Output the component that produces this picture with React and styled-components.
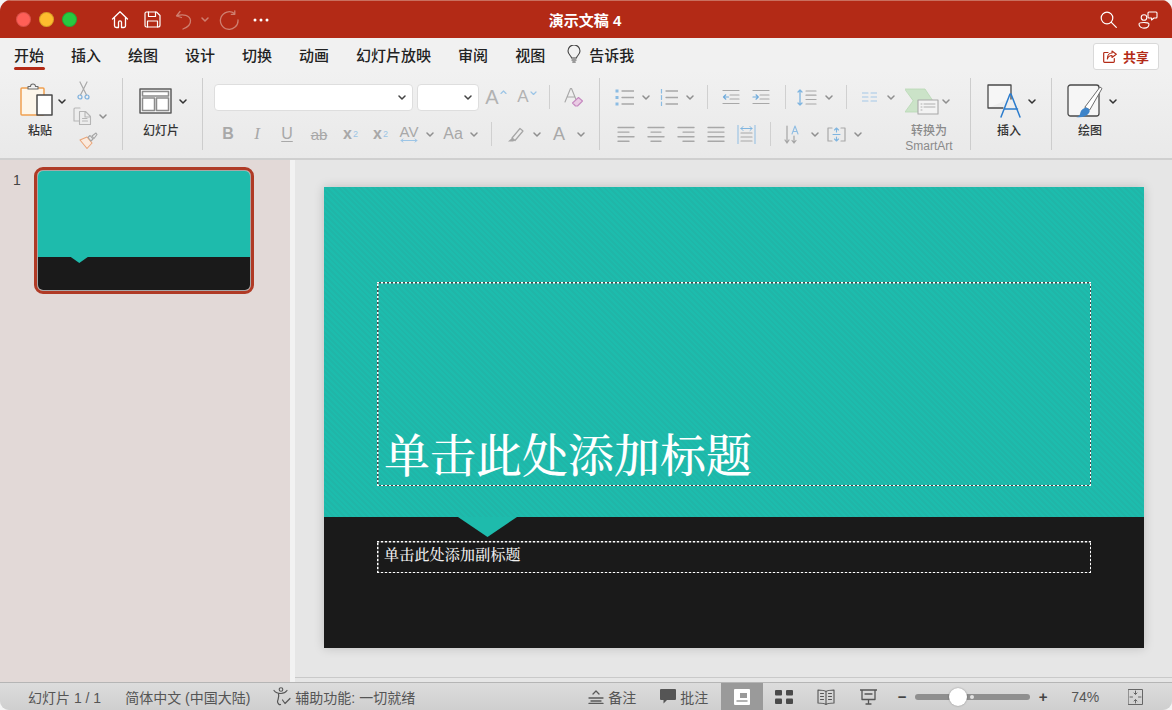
import styled, { createGlobalStyle, css } from 'styled-components';

const RED = '#b32a16';
const GREY = '#a8a8a8';
const BLUE = '#9cc5e6';

const GlobalStyle = createGlobalStyle`
  html, body { margin: 0; padding: 0; background: #f4f4f4; }
  body { font-family: "Liberation Sans", "Noto Sans CJK SC", sans-serif; }
`;

// --- WINDOW ---
const Window = styled.div`
  width: 1172px;
  height: 710px;
  display: flex;
  flex-direction: column;
  overflow: hidden;
  border-radius: 11px 11px 9px 9px;
  background: #e6e6e6;
`;

const TitleBar = styled.header`
  height: 38px;
  flex: none;
  position: relative;
  display: flex;
  align-items: center;
  padding: 0 14px 0 16px;
  background: ${RED};
  box-sizing: border-box;
  border-top: 1px solid #c9705f;
`;

const Light = styled.span`
  width: 15px;
  height: 15px;
  border-radius: 50%;
  margin-right: 8px;
  background: ${p => p.$color};
  box-shadow: inset 0 0 0 1px rgba(0, 0, 0, 0.15);
`;

const QuickTool = styled.span`
  width: ${p => p.$w}px;
  display: inline-flex;
  justify-content: center;
  align-items: center;
  margin-left: ${p => p.$ml || 0}px;
`;

const DocTitle = styled.div`
  position: absolute;
  left: 0;
  right: 0;
  text-align: center;
  padding-right: 2px;
  color: #fff;
  font-size: 15px;
  font-weight: 700;
  pointer-events: none;
`;

const Spacer = styled.div`
  flex: 1;
`;

const TabBar = styled.nav`
  height: 32px;
  flex: none;
  display: flex;
  align-items: center;
  padding: 0 13px 0 14px;
  background: #f1f1f1;
  box-sizing: border-box;
`;

const Tab = styled.span`
  position: relative;
  font-size: 15px;
  font-weight: 500;
  color: #222;
  margin-right: 27px;
  white-space: nowrap;
  ${p => p.$active && `
    &::after {
      content: '';
      position: absolute;
      left: 0;
      right: -1px;
      bottom: -5px;
      height: 3px;
      border-radius: 2px;
      background: ${RED};
    }
  `}
`;

const TellMe = styled.span`
  display: inline-flex;
  align-items: center;
  gap: 8px;
  margin-left: -5px;
  font-size: 15px;
  font-weight: 500;
  color: #222;
`;

const ShareButton = styled.button`
  width: 66px;
  height: 27px;
  margin-top: 5px;
  display: flex;
  align-items: center;
  justify-content: center;
  gap: 6px;
  padding: 0;
  background: #fff;
  border: 1px solid #d9d9d9;
  border-radius: 3px;
  color: ${RED};
  font: 700 13px "Liberation Sans", "Noto Sans CJK SC", sans-serif;
`;

// --- RIBBON ---
const Ribbon = styled.section`
  height: 90px;
  flex: none;
  display: flex;
  align-items: flex-start;
  box-sizing: border-box;
  background: linear-gradient(#f1f1f1, #e9e9e9);
  border-bottom: 2px solid #cfcfcf;
`;

const Group = styled.div`
  width: ${p => p.$w}px;
  height: 88px;
  flex: none;
  display: flex;
  box-sizing: border-box;
  padding-left: ${p => p.$pl || 0}px;
`;

const GroupSep = styled.div`
  width: 1px;
  height: 72px;
  margin-top: 8px;
  flex: none;
  background: #cdcdcd;
`;

const Big = styled.div`
  width: ${p => p.$w}px;
  flex: none;
  display: flex;
  flex-direction: column;
  padding-top: 13px;
`;

const BigIcon = styled.div`
  height: 36px;
  display: flex;
  align-items: center;
  padding-left: ${p => p.$pl || 0}px;
`;

const BigLabel = styled.div`
  font-size: 12px;
  line-height: 15px;
  margin-top: 5px;
  width: ${p => p.$w}px;
  text-align: center;
  font-weight: 500;
  color: ${p => (p.$muted ? '#8a8a8a' : '#333')};
`;

const Stack = styled.div`
  display: flex;
  flex-direction: column;
  align-items: flex-start;
  width: ${p => p.$w}px;
  padding-top: ${p => p.$pt ?? 13}px;
  gap: ${p => p.$gap ?? 9}px;
  flex: none;
`;

const ToolRow = styled.div`
  height: ${p => p.$h || 28}px;
  display: flex;
  align-items: center;
`;

const Tool = styled.span`
  width: ${p => p.$w}px;
  margin-left: ${p => p.$ml || 0}px;
  flex: none;
  display: inline-flex;
  justify-content: center;
  align-items: center;
  color: ${p => p.$color || GREY};
  font-size: ${p => p.$size || 15}px;
  font-weight: ${p => p.$weight || 400};
  font-family: ${p => (p.$serif ? '"Liberation Serif", serif' : 'inherit')};
`;

const RowSep = styled.span`
  width: 1px;
  height: 24px;
  flex: none;
  margin-left: ${p => p.$ml || 0}px;
  background: #d0d0d0;
`;

const FontBox = styled.div`
  width: ${p => p.$w}px;
  height: 27px;
  flex: none;
  margin-right: ${p => p.$mr || 0}px;
  display: flex;
  align-items: center;
  justify-content: flex-end;
  padding-right: 6px;
  box-sizing: border-box;
  background: #fff;
  border: 1px solid #dedede;
  border-radius: 4px;
`;

const Caret = styled.span`
  display: inline-flex;
  align-self: flex-start;
  margin: 4px 0 0 1px;
`;

const Sup = styled.sup`
  font-size: 9px;
  font-weight: 400;
  color: ${BLUE};
  margin-left: 1px;
`;

const Sub = styled.sub`
  font-size: 9px;
  font-weight: 400;
  color: ${BLUE};
  margin-left: 1px;
`;

const Strike = styled.span`
  text-decoration: line-through;
`;

const Under = styled.span`
  text-decoration: underline;
  text-underline-offset: 2px;
`;

const AV = styled.span`
  display: inline-flex;
  flex-direction: column;
  align-items: center;
  font-size: 15px;
  line-height: 13px;
`;

// --- MAIN AREA ---
const Main = styled.main`
  flex: 1;
  min-height: 0;
  display: flex;
`;

const SlidePanel = styled.aside`
  width: 272px;
  flex: none;
  display: flex;
  gap: 16px;
  padding: 7px 5px 0 13px;
  background: #e2d9d7;
  border-right: 5px solid #f2f2f2;
`;

const SlideNumber = styled.span`
  font-size: 14px;
  color: #444;
  margin-top: 5px;
`;

const Thumb = styled.div`
  width: 214px;
  height: 121px;
  flex: none;
  position: relative;
  display: flex;
  flex-direction: column;
  border: 1px solid #a7a7a7;
  outline: 3px solid #b03a25;
  border-radius: 6px;
  margin-top: 3px;
  box-sizing: border-box;
`;

const ThumbTop = styled.div`
  height: 86px;
  position: relative;
  background: #1ebbac;
  border-radius: 5px 5px 0 0;
`;

const ThumbBottom = styled.div`
  flex: 1;
  background: #1a1a1a;
  border-radius: 0 0 5px 5px;
`;

const Notch = styled.div`
  position: absolute;
  top: 100%;
  left: ${p => p.$left}px;
  width: ${p => p.$w}px;
  height: ${p => p.$h}px;
  background: #1ebbac;
  clip-path: polygon(0 0, 100% 0, 50% 100%);
`;

const Stage = styled.div`
  flex: 1;
  min-width: 0;
  display: flex;
  flex-direction: column;
  background: #e6e6e6;
`;

const StageInner = styled.div`
  flex: 1;
  padding: 27px 0 0 29px;
  border-bottom: 1px solid #c9c9c9;
  margin-bottom: 4px;
`;

const Slide = styled.article`
  width: 820px;
  height: 461px;
  display: flex;
  flex-direction: column;
  box-shadow: 0 0 10px rgba(0, 0, 0, 0.18);
  font-family: "Noto Serif CJK SC", "Liberation Serif", "Noto Sans CJK SC", serif;
`;

const SlideTop = styled.div`
  height: 330px;
  flex: none;
  position: relative;
  box-sizing: border-box;
  padding: 95px 53px 31px 53px;
  background: repeating-linear-gradient(45deg, #1dbcad 0 2px, #20b6a8 2px 4px);
`;

const SlideBottom = styled.div`
  flex: 1;
  padding: 24px 53px 0;
  background: #1a1a1a;
`;

// dashed selection frame, white with dark gaps
const selectionFrame = css`
  background:
    repeating-linear-gradient(90deg, #fff 0 2px, #4a4a4a 2px 4px) left top / 100% 1.5px no-repeat,
    repeating-linear-gradient(90deg, #fff 0 2px, #4a4a4a 2px 4px) left bottom / 100% 1.5px no-repeat,
    repeating-linear-gradient(0deg, #fff 0 2px, #4a4a4a 2px 4px) left top / 1.5px 100% no-repeat,
    repeating-linear-gradient(0deg, #fff 0 2px, #4a4a4a 2px 4px) right top / 1.5px 100% no-repeat;
`;

const TitleHolder = styled.div`
  height: 100%;
  box-sizing: border-box;
  display: flex;
  align-items: flex-end;
  padding: 0 7px 4px;
  ${selectionFrame}
`;

const TitleText = styled.h1`
  margin: 0;
  color: #fff;
  font-size: 46px;
  line-height: 60px;
  font-weight: 500;
`;

const SubtitleHolder = styled.div`
  height: 32px;
  box-sizing: border-box;
  padding: 0 7px;
  color: #efefef;
  font-size: 15px;
  font-weight: 500;
  letter-spacing: 0.2px;
  line-height: 25px;
  ${selectionFrame}
`;

// --- STATUS BAR ---
const StatusBar = styled.footer`
  height: 28px;
  flex: none;
  display: flex;
  align-items: center;
  box-sizing: border-box;
  padding-left: 28px;
  background: linear-gradient(#dcdcdc, #cfcfcf);
  border-top: 1px solid #b5b5b5;
  color: #555;
  font-size: 14px;
`;

const StatusText = styled.span`
  margin-left: ${p => p.$ml || 0}px;
  white-space: nowrap;
  display: inline-flex;
  align-items: center;
  gap: ${p => p.$gap || 0}px;
`;

const ViewButton = styled.span`
  width: ${p => p.$w || 42}px;
  height: 27px;
  margin-left: ${p => p.$ml || 0}px;
  flex: none;
  display: inline-flex;
  align-items: center;
  justify-content: center;
  background: ${p => (p.$active ? '#9a9a9a' : 'transparent')};
`;

const ZoomTrack = styled.div`
  width: 115px;
  height: 6px;
  margin: 0 8px 0 8px;
  position: relative;
  border-radius: 3px;
  background: #8f8f8f;

  &::after {
    content: '';
    position: absolute;
    left: 55px;
    top: 1px;
    width: 4px;
    height: 4px;
    border-radius: 50%;
    background: #e2e2e2;
  }
`;

const ZoomThumb = styled.span`
  position: absolute;
  left: 34px;
  top: -6px;
  width: 18px;
  height: 18px;
  border-radius: 50%;
  background: #fff;
  box-shadow: 0 0 2px rgba(0, 0, 0, 0.35);
`;

// --- ICONS ---
const Svg = ({ w, h = w, children, vb }) => (
  <svg width={w} height={h} viewBox={vb || `0 0 ${w} ${h}`} fill="none" strokeLinecap="round" strokeLinejoin="round">{children}</svg>
);

const Chev = ({ color = '#8f8f8f', w = 8 }) => (
  <Svg w={w} h={5} vb="0 0 8 5"><path d="M1 1l3 3 3-3" stroke={color} strokeWidth="1.500" /></Svg>
);

const Lines = ({ rows, color = GREY }) => (
  <Svg w={18} h={17}>
    {rows.map(([x1, x2], i) => <path key={i} d={`M${x1} ${1.5 + i * 4.6}H${x2}`} stroke={color} strokeWidth="1.400" />)}
  </Svg>
);

const Home = () => (
  <Svg w={18} h={19}><path d="M1.500 9L9 1.800 16.500 9M3.500 7.500v8.200a1.800 1.800 0 0 0 1.800 1.800h2.200v-5.200a1.500 1.500 0 0 1 3 0v5.200h2.200a1.800 1.800 0 0 0 1.800-1.800V7.500" stroke="#fff" strokeWidth="1.300" /></Svg>
);

const Save = () => (
  <Svg w={17} h={17}>
    <path d="M2.500 1h10l3.500 3.500v9.500a2 2 0 0 1-2 2h-11.500a1.500 1.500 0 0 1-1.500-1.500v-12a1.500 1.500 0 0 1 1.500-1.500z" stroke="#fff" strokeWidth="1.200" />
    <path d="M4.500 1v4.500h7v-4.500M3.500 16v-6h10v6" stroke="#fff" strokeWidth="1.200" />
  </Svg>
);

const Undo = () => (
  <Svg w={18} h={20}><path d="M5 1.500L1.500 6 6.500 7.500M2 6c6-2.500 13-.5 13.500 4.500.3 4-3.500 7-7.500 8.500" stroke="#cf7f70" strokeWidth="1.300" /></Svg>
);

const Redo = () => (
  <Svg w={20} h={20}><path d="M15.500 3.500A8.800 8.800 0 1 0 19 10M15.800.8v3.500h-3.500" stroke="#cf7f70" strokeWidth="1.300" /></Svg>
);

const Search = () => (
  <Svg w={17} h={17}><circle cx="7" cy="7" r="5.800" stroke="#fff" strokeWidth="1.200" /><path d="M11.300 11.300l5 5" stroke="#fff" strokeWidth="1.200" /></Svg>
);

const People = () => (
  <Svg w={20} h={18}>
    <circle cx="6" cy="6.500" r="2.800" stroke="#fff" strokeWidth="1.100" />
    <path d="M1 13c0-2 10-2 10 0 0 5.500-10 5.500-10 0z" stroke="#fff" strokeWidth="1.100" />
    <path d="M11 1h7a1 1 0 0 1 1 1v4a1 1 0 0 1-1 1h-2l-2.500 2v-2h-2.500a1 1 0 0 1-1-1v-4a1 1 0 0 1 1-1z" stroke="#fff" strokeWidth="1.100" />
  </Svg>
);

const Bulb = () => (
  <Svg w={14} h={19}>
    <path d="M4.500 13c0-2-3.500-3.500-3.500-7a6 6 0 0 1 12 0c0 3.500-3.500 5-3.500 7z" stroke="#444" strokeWidth="1.100" />
    <path d="M5 15h4M5.800 17h2.400" stroke="#444" strokeWidth="1.200" />
  </Svg>
);

const ShareIcon = () => (
  <Svg w={14} h={13}>
    <path d="M5 2.500h-3.500a.8.8 0 0 0-.8.8v8.200a.8.8 0 0 0 .8.8h9a.8.8 0 0 0 .8-.8v-3" stroke={RED} strokeWidth="1.200" />
    <path d="M9 1l4.300 3.300L9 7.500V5.500C6.500 5.500 5 7 4.300 9c0-3.500 1.800-6 4.700-6z" stroke={RED} strokeWidth="1.100" />
  </Svg>
);

const PasteIcon = () => (
  <Svg w={35} h={36}>
    <rect x="1" y="5" width="23" height="27" rx="1" fill="#fdf6ea" stroke="#f0a050" strokeWidth="1.500" />
    <path d="M8 6V3.500h2.500a2.500 2.500 0 0 1 5 0H18V6z" fill="#f2f2f2" stroke="#6b6b6b" strokeWidth="1.100" />
    <rect x="17" y="12" width="15" height="20" fill="#fff" stroke="#4a4a4a" strokeWidth="1.500" />
  </Svg>
);

const Scissors = () => (
  <Svg w={13} h={19}>
    <path d="M3 1l6.500 13M10 1L3.500 14" stroke="#a9a9a9" strokeWidth="1.200" />
    <circle cx="3" cy="16" r="2" stroke="#7cb0dd" strokeWidth="1.200" />
    <circle cx="10" cy="16" r="2" stroke="#7cb0dd" strokeWidth="1.200" />
  </Svg>
);

const CopyIcon = () => (
  <Svg w={20} h={18}>
    <path d="M7 1H2a1 1 0 0 0-1 1v12h5" stroke="#b5b5b5" strokeWidth="1.100" />
    <path d="M6.500 4.500h6l5 5v8h-11zM12 5v5h5.500M9.500 11.500h4.500M9.500 14h5" stroke="#b5b5b5" strokeWidth="1.100" />
  </Svg>
);

const BrushIcon = () => (
  <Svg w={19} h={17}>
    <path d="M1 8l7-3 5 6-5 5.500z" fill="#fbeadd" stroke="#eaa578" strokeWidth="1.100" />
    <path d="M9 5.500l2-2 3 3.500-2 2zM13 4l4-3 1 1.500-3 4z" stroke="#a5a5a5" strokeWidth="1.100" />
  </Svg>
);

const LayoutIcon = () => (
  <Svg w={33} h={26}>
    <rect x="1" y="1" width="31" height="24" fill="#f6f6f6" stroke="#5d5d5d" strokeWidth="1.500" />
    <path d="M3.500 3.500h26v4.500h-26zM3.500 10h12v12.500h-12zM17.500 10h12v12.500h-12z" fill="#fff" stroke="#8c8c8c" strokeWidth="1.500" />
  </Svg>
);

const Eraser = () => (
  <Svg w={20} h={20}>
    <path d="M1 15L6.500 1.500h1L13 15M3 10h8" stroke="#a8a8a8" strokeWidth="1.100" />
    <path d="M8.500 16l6-5.500 4 3.500-5 5h-2z" fill="#eacbe4" stroke="#c689c0" strokeWidth="1.100" />
  </Svg>
);

const Marker = () => (
  <Svg w={17} h={15}>
    <path d="M5 11L13 1.500l3 2.500-8 9.500z" stroke="#a5a5a5" strokeWidth="1.200" />
    <path d="M5 11l3 2.500-2 1H1z" fill="#a5a5a5" />
  </Svg>
);

const Bullets = ({ numbered }) => (
  <Svg w={19} h={17}>
    {[2, 8.5, 15].map((y, i) => (
      <g key={y}>
        <path d={`M7 ${y}H19`} stroke="#a8a8a8" strokeWidth="1.300" />
        {numbered
          ? <path d={`M2.500 ${y - 2}v4`} stroke="#8bbce3" strokeWidth="1.200" />
          : <rect x="0.500" y={y - 1.5} width="3" height="3" fill="#8bbce3" />}
      </g>
    ))}
  </Svg>
);

const Indent = ({ flip }) => (
  <Svg w={18} h={16}>
    <path d="M1 1.500h16M8 6h9M8 10h9M1 14.500h16" stroke="#a8a8a8" strokeWidth="1.200" />
    <path d={flip ? 'M1 8h5M4 5.800L6.300 8 4 10.200' : 'M6.500 8h-5M3.800 5.800L1.500 8l2.300 2.200'} stroke="#6fabdc" strokeWidth="1.200" />
  </Svg>
);

const LineSpacing = () => (
  <Svg w={20} h={17}>
    <path d="M3 1v15M1 3l2-2 2 2M1 14l2 2 2-2" stroke="#7fb5e0" strokeWidth="1.300" />
    <path d="M9 2h10M9 6.200h10M9 10.500h10M9 15h10" stroke="#a8a8a8" strokeWidth="1.200" />
  </Svg>
);

const Columns = () => (
  <Svg w={15} h={10}><path d="M0 1h6M0 5h6M0 9h6M9 1h6M9 5h6M9 9h6" stroke="#a3c8e8" strokeWidth="1.100" /></Svg>
);

const Justify = () => (
  <Svg w={19} h={19}>
    <path d="M1 0v19M18 0v19" stroke="#8fbde3" strokeWidth="1" />
    <path d="M4 3.500h11M6 1.500l-2 2 2 2M13 1.500l2 2-2 2" stroke="#7fb5e0" strokeWidth="1" />
    <path d="M4 8h11M4 12h11M4 16h11" stroke="#a8a8a8" strokeWidth="1.200" />
  </Svg>
);

const TextDir = () => (
  <Svg w={18} h={19}>
    <path d="M3 1v17M1 15l2 3 2-3M10 11v7M8 15.500l2 2.500 2-2.500" stroke="#a5a5a5" strokeWidth="1.200" />
    <path d="M8 9l3-8 3 8M9 6.500h4" stroke="#8fbde3" strokeWidth="1.100" />
  </Svg>
);

const TextAlignBox = () => (
  <Svg w={19} h={15}>
    <path d="M5 1H1v13h4M14 1h4v13h-4" stroke="#a8a8a8" strokeWidth="1.200" />
    <path d="M9.500 1v4M7.500 3l2-2 2 2M9.500 14v-4M7.500 12l2 2 2-2M6 7.500h7" stroke="#7fb5e0" strokeWidth="1.100" />
  </Svg>
);

const SmartArtIcon = () => (
  <Svg w={34} h={27}>
    <path d="M0 1h20l8 12-8 11H0l8-11z" fill="#cbe3c8" stroke="#b8d8b4" strokeWidth="0.800" />
    <rect x="13" y="12" width="20" height="14" fill="#f3f3f3" stroke="#a8a8a8" strokeWidth="1.100" />
    <path d="M16 16h1M19 16h11M16 19h1M19 19h11M16 22h1" stroke="#a8a8a8" strokeWidth="0.900" />
  </Svg>
);

const InsertIcon = () => (
  <Svg w={34} h={34}>
    <path d="M1 24V1h23v13" fill="#f6f6f6" />
    <path d="M16 24H1V1h23v14" stroke="#4a4a4a" strokeWidth="1.300" />
    <path d="M14 33L23 10h1l9 23M17.500 25h13" stroke="#2b7ccd" strokeWidth="1.500" />
  </Svg>
);

const DrawIcon = () => (
  <Svg w={36} h={34}>
    <rect x="1" y="1" width="31" height="31" rx="2.500" fill="#f6f6f6" stroke="#4a4a4a" strokeWidth="1.300" />
    <path d="M18 23L33 3l2 1.500-12 21z" fill="#fff" stroke="#6d6d6d" strokeWidth="1" />
    <path d="M9 33c3 0 4-2 4.500-5 1-3 5-5 7-4 2 1 3 3 1.500 5-2 3-7 5-13 4z" fill="#3d84c9" />
  </Svg>
);

const NotesIcon = () => (
  <Svg w={16} h={14}><path d="M1 8h14M3 11h10M1 13.500h14M5 4l3-3 3 3" stroke="#5a5a5a" strokeWidth="1.300" /></Svg>
);

const CommentIcon = () => (
  <Svg w={16} h={15}><path d="M1 0h14a1 1 0 0 1 1 1v9a1 1 0 0 1-1 1H7l-3.500 3.500V11H1a1 1 0 0 1-1-1V1a1 1 0 0 1 1-1z" fill="#555" /></Svg>
);

const AccessIcon = () => (
  <Svg w={19} h={19}>
    <circle cx="8" cy="2.500" r="1.800" stroke="#555" strokeWidth="1.100" />
    <path d="M1 3.500c1.500 2 3.500 3 7 3s4.500-1 6-3M5.500 7c1 3-.5 5-1 7.500 0 2 2 3.500 3 3M9.500 13l2.500 3.500 5-5" stroke="#555" strokeWidth="1.200" />
  </Svg>
);

const NormalView = () => (
  <Svg w={16} h={16}>
    <rect width="16" height="16" rx="1" fill="#fff" />
    <path d="M6 4h7v5H6z" fill="#9a9a9a" /><path d="M3 12h10" stroke="#9a9a9a" strokeWidth="1.500" />
  </Svg>
);

const GridView = () => (
  <Svg w={18} h={14}>
    {[[0, 0], [11, 0], [0, 8.5], [11, 8.5]].map(([x, y]) => <rect key={`${x}${y}`} x={x} y={y} width="7" height="5.500" rx="1" fill="#4a4a4a" />)}
  </Svg>
);

const BookView = () => (
  <Svg w={18} h={16}>
    <path d="M9 2.500C7 1 4 1 1 1v13c3 0 6 0 8 1.500 2-1.500 5-1.500 8-1.500V1c-3 0-6 0-8 1.500zM9 2.500v13M3.500 4.500h3M3.500 7.500h3M3.500 10.500h3M11.500 4.500h3M11.500 7.500h3M11.500 10.500h3" stroke="#555" strokeWidth="1.100" />
  </Svg>
);

const PresentView = () => (
  <Svg w={17} h={16}>
    <path d="M0 1h17M2 1.500v9h13v-9M8.500 10.500V15M6 15h5M5 5h7" stroke="#555" strokeWidth="1.300" />
  </Svg>
);

const FitIcon = () => (
  <Svg w={15} h={16}>
    <rect x="0.500" y="0.500" width="14" height="15" stroke="#666" strokeWidth="1" />
    <path d="M7.500 2v3M6 4l1.500 1.500L9 4M7.500 14v-3M6 12l1.500-1.500L9 12M2 8h2.500M13 8h-2.500" stroke="#666" strokeWidth="1" />
  </Svg>
);

const TAB_NAMES = ['插入', '绘图', '设计', '切换', '动画', '幻灯片放映', '审阅', '视图'];

export default function App() {
  return (
    <Window>
      <GlobalStyle />
      <TitleBar>
        <Light $color="#ff5f57" />
        <Light $color="#febc2e" />
        <Light $color="#28c840" />
        <QuickTool $w={18} $ml={26}><Home /></QuickTool>
        <QuickTool $w={17} $ml={15}><Save /></QuickTool>
        <QuickTool $w={18} $ml={14}><Undo /></QuickTool>
        <QuickTool $w={8} $ml={8}><Chev color="#cf7f70" /></QuickTool>
        <QuickTool $w={20} $ml={10}><Redo /></QuickTool>
        <QuickTool $w={16} $ml={14}>
          <Svg w={16} h={4}><circle cx="2" cy="2" r="1.500" fill="#fff" /><circle cx="8" cy="2" r="1.500" fill="#fff" /><circle cx="14" cy="2" r="1.500" fill="#fff" /></Svg>
        </QuickTool>
        <DocTitle>演示文稿 4</DocTitle>
        <Spacer />
        <QuickTool $w={17}><Search /></QuickTool>
        <QuickTool $w={20} $ml={21}><People /></QuickTool>
      </TitleBar>

      <TabBar>
        <Tab $active>开始</Tab>
        {TAB_NAMES.map(name => <Tab key={name}>{name}</Tab>)}
        <TellMe><Bulb />告诉我</TellMe>
        <Spacer />
        <ShareButton><ShareIcon />共享</ShareButton>
      </TabBar>

      <Ribbon>
        <Group $w={122} $pl={20}>
          <Big $w={50}>
            <BigIcon>
              <PasteIcon />
              <Tool $w={13} $color="#333"><Chev color="#333" /></Tool>
            </BigIcon>
            <BigLabel $w={40}>粘贴</BigLabel>
          </Big>
          <Stack $w={48} $pt={11} $gap={6}>
            <Tool $w={26} $color="#aaa"><Scissors /></Tool>
            <ToolRow $h={20}>
              <Tool $w={26}><CopyIcon /></Tool>
              <Tool $w={14}><Chev /></Tool>
            </ToolRow>
            <Tool $w={36}><BrushIcon /></Tool>
          </Stack>
        </Group>
        <GroupSep />

        <Group $w={79} $pl={16}>
          <Big $w={60}>
            <BigIcon>
              <LayoutIcon />
              <Tool $w={22}><Chev color="#333" /></Tool>
            </BigIcon>
            <BigLabel $w={44}>幻灯片</BigLabel>
          </Big>
        </Group>
        <GroupSep />

        <Group $w={396} $pl={11}>
          <Stack $w={385}>
            <ToolRow>
              <FontBox $w={199} $mr={4}><Chev color="#444" /></FontBox>
              <FontBox $w={62}><Chev color="#444" /></FontBox>
              <Tool $w={34} $size={20} $color="#b2b2b2">A<Caret><Svg w={7} h={4}><path d="M1 3.500l2.500-2.500 2.500 2.500" stroke={BLUE} strokeWidth="1.200" /></Svg></Caret></Tool>
              <Tool $w={28} $size={17} $color="#b2b2b2">A<Caret><Svg w={7} h={4}><path d="M1 1l2.500 2.500L6 1" stroke={BLUE} strokeWidth="1.200" /></Svg></Caret></Tool>
              <RowSep $ml={8} />
              <Tool $w={48}><Eraser /></Tool>
            </ToolRow>
            <ToolRow>
              <Tool $w={28} $size={16} $weight={700}>B</Tool>
              <Tool $w={30} $size={17} $serif><em>I</em></Tool>
              <Tool $w={30} $size={16}><Under>U</Under></Tool>
              <Tool $w={34}><Strike>ab</Strike></Tool>
              <Tool $w={29} $size={16} $weight={700}>x<Sup>2</Sup></Tool>
              <Tool $w={31} $size={16} $weight={700}>x<Sub>2</Sub></Tool>
              <Tool $w={26}>
                <AV>AV<Svg w={18} h={5}><path d="M1 2.500h16M3 1L1 2.500 3 4M15 1l2 1.500L15 4" stroke={BLUE} strokeWidth="1" /></Svg></AV>
              </Tool>
              <Tool $w={16}><Chev /></Tool>
              <Tool $w={30} $size={16}>Aa</Tool>
              <Tool $w={12}><Chev /></Tool>
              <RowSep $ml={11} />
              <Tool $w={35} $ml={6}><Marker /></Tool>
              <Tool $w={8}><Chev /></Tool>
              <Tool $w={36} $size={18}>A</Tool>
              <Tool $w={8}><Chev /></Tool>
            </ToolRow>
          </Stack>
        </Group>
        <GroupSep />

        <Group $w={370}>
          <Stack $w={297}>
            <ToolRow>
              <Tool $w={36} $ml={6}><Bullets /></Tool>
              <Tool $w={8}><Chev /></Tool>
              <Tool $w={36}><Bullets numbered /></Tool>
              <Tool $w={8}><Chev /></Tool>
              <RowSep $ml={13} />
              <Tool $w={34} $ml={6}><Indent /></Tool>
              <Tool $w={26}><Indent flip /></Tool>
              <RowSep $ml={11} />
              <Tool $w={36} $ml={3}><LineSpacing /></Tool>
              <Tool $w={8}><Chev /></Tool>
              <RowSep $ml={13} />
              <Tool $w={35} $ml={5}><Columns /></Tool>
              <Tool $w={8}><Chev /></Tool>
            </ToolRow>
            <ToolRow>
              <Tool $w={30} $ml={11}><Lines rows={[[1, 17], [1, 12], [1, 17], [1, 12]]} /></Tool>
              <Tool $w={30}><Lines rows={[[1, 17], [4, 14], [1, 17], [4, 14]]} /></Tool>
              <Tool $w={30}><Lines rows={[[1, 17], [6, 17], [1, 17], [6, 17]]} /></Tool>
              <Tool $w={30}><Lines rows={[[1, 17], [1, 17], [1, 17], [1, 17]]} /></Tool>
              <Tool $w={30}><Justify /></Tool>
              <RowSep $ml={9} />
              <Tool $w={36} $ml={4}><TextDir /></Tool>
              <Tool $w={8}><Chev /></Tool>
              <Tool $w={35}><TextAlignBox /></Tool>
              <Tool $w={8}><Chev /></Tool>
            </ToolRow>
          </Stack>
          <Big $w={65}>
            <BigIcon $pl={8}>
              <SmartArtIcon />
              <Tool $w={14}><Chev /></Tool>
            </BigIcon>
            <BigLabel $w={64} $muted>转换为<br />SmartArt</BigLabel>
          </Big>
        </Group>
        <GroupSep />

        <Group $w={80} $pl={16}>
          <Big $w={60}>
            <BigIcon>
              <InsertIcon />
              <Tool $w={22}><Chev color="#333" /></Tool>
            </BigIcon>
            <BigLabel $w={44}>插入</BigLabel>
          </Big>
        </Group>
        <GroupSep />

        <Group $w={120} $pl={15}>
          <Big $w={70}>
            <BigIcon>
              <DrawIcon />
              <Tool $w={20}><Chev color="#333" /></Tool>
            </BigIcon>
            <BigLabel $w={46}>绘图</BigLabel>
          </Big>
        </Group>
      </Ribbon>

      <Main>
        <SlidePanel>
          <SlideNumber>1</SlideNumber>
          <Thumb>
            <ThumbTop><Notch $left={33} $w={17} $h={6} /></ThumbTop>
            <ThumbBottom />
          </Thumb>
        </SlidePanel>
        <Stage>
          <StageInner>
            <Slide>
              <SlideTop>
                <TitleHolder><TitleText>单击此处添加标题</TitleText></TitleHolder>
                <Notch $left={134} $w={59} $h={20} />
              </SlideTop>
              <SlideBottom>
                <SubtitleHolder>单击此处添加副标题</SubtitleHolder>
              </SlideBottom>
            </Slide>
          </StageInner>
        </Stage>
      </Main>

      <StatusBar>
        <StatusText>幻灯片 1 / 1</StatusText>
        <StatusText $ml={24}>简体中文 (中国大陆)</StatusText>
        <StatusText $ml={23} $gap={3}><AccessIcon />辅助功能: 一切就绪</StatusText>
        <StatusText $ml={173} $gap={4}><NotesIcon />备注</StatusText>
        <StatusText $ml={24} $gap={4}><CommentIcon />批注</StatusText>
        <ViewButton $active $ml={13}><NormalView /></ViewButton>
        <ViewButton><GridView /></ViewButton>
        <ViewButton><BookView /></ViewButton>
        <ViewButton><PresentView /></ViewButton>
        <Tool $w={10} $ml={8} $color="#444" $size={15} $weight={700}>−</Tool>
        <ZoomTrack><ZoomThumb /></ZoomTrack>
        <Tool $w={10} $color="#444" $size={15} $weight={700}>+</Tool>
        <StatusText $ml={23}>74%</StatusText>
        <ViewButton $w={16} $ml={28}><FitIcon /></ViewButton>
      </StatusBar>
    </Window>
  );
}
